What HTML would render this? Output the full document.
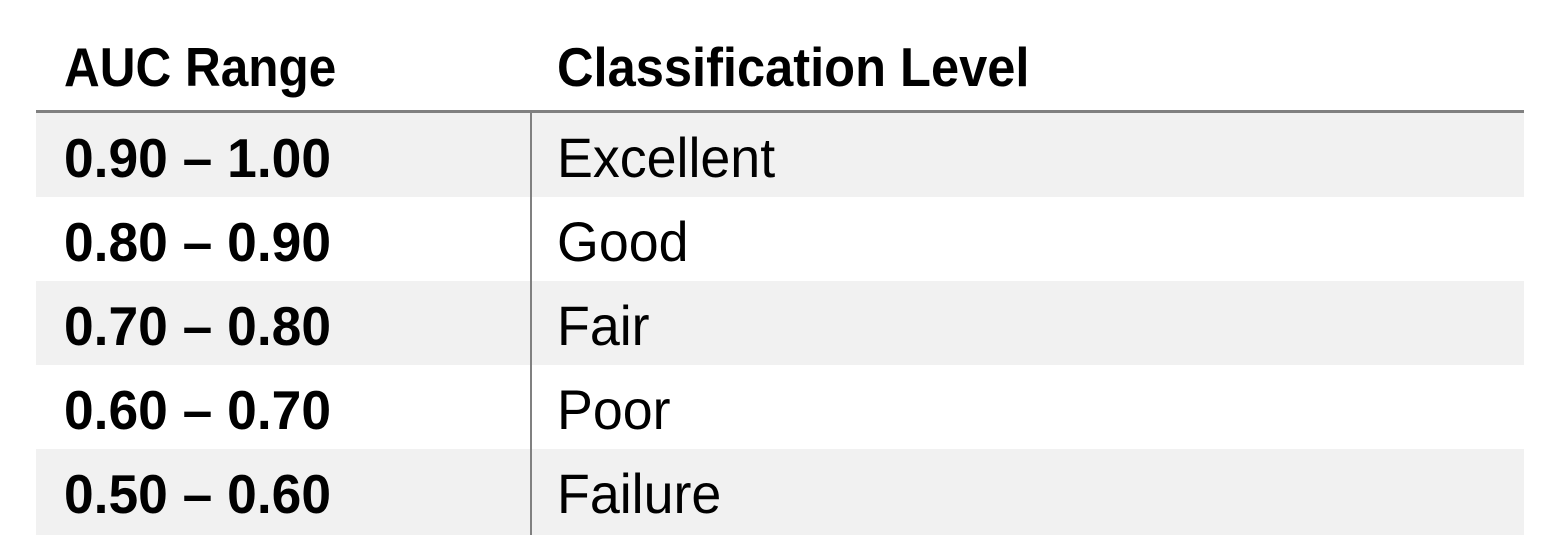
<!DOCTYPE html>
<html><head><style>
body{margin:0;width:1567px;height:559px;background:#fff;position:relative;overflow:hidden;font-family:"Liberation Sans",Arial,sans-serif;color:#000}
.row{position:absolute;left:36px;width:1488px;height:84px}
.g{background:#f1f1f1}
.t{position:absolute;font-size:55px;line-height:60px;white-space:nowrap;transform-origin:left center}
.b{font-weight:bold}
.n{transform:scaleX(0.97)}
.r{font-size:56px;transform:scaleX(0.96)}
</style></head><body>
<div class="t b" style="left:64px;top:37px;transform:scaleX(0.9)">AUC Range</div>
<div class="t b" style="left:557px;top:37px;transform:scaleX(0.92)">Classification Level</div>
<div style="position:absolute;left:36px;top:110px;width:1488px;height:3px;background:#808080"></div>
<div class="row g" style="top:113px"></div>
<div class="row" style="top:197px"></div>
<div class="row g" style="top:281px"></div>
<div class="row" style="top:365px"></div>
<div class="row g" style="top:449px;height:86px"></div>
<div style="position:absolute;left:530px;top:113px;width:2px;height:422px;background:#808080"></div>

<div class="t b n" style="left:64px;top:128px">0.90 – 1.00</div>
<div class="t r" style="left:557px;top:128px">Excellent</div>
<div class="t b n" style="left:64px;top:212px">0.80 – 0.90</div>
<div class="t r" style="left:557px;top:212px">Good</div>
<div class="t b n" style="left:64px;top:296px">0.70 – 0.80</div>
<div class="t r" style="left:557px;top:296px">Fair</div>
<div class="t b n" style="left:64px;top:380px">0.60 – 0.70</div>
<div class="t r" style="left:557px;top:380px">Poor</div>
<div class="t b n" style="left:64px;top:464px">0.50 – 0.60</div>
<div class="t r" style="left:557px;top:464px">Failure</div>
</body></html>
